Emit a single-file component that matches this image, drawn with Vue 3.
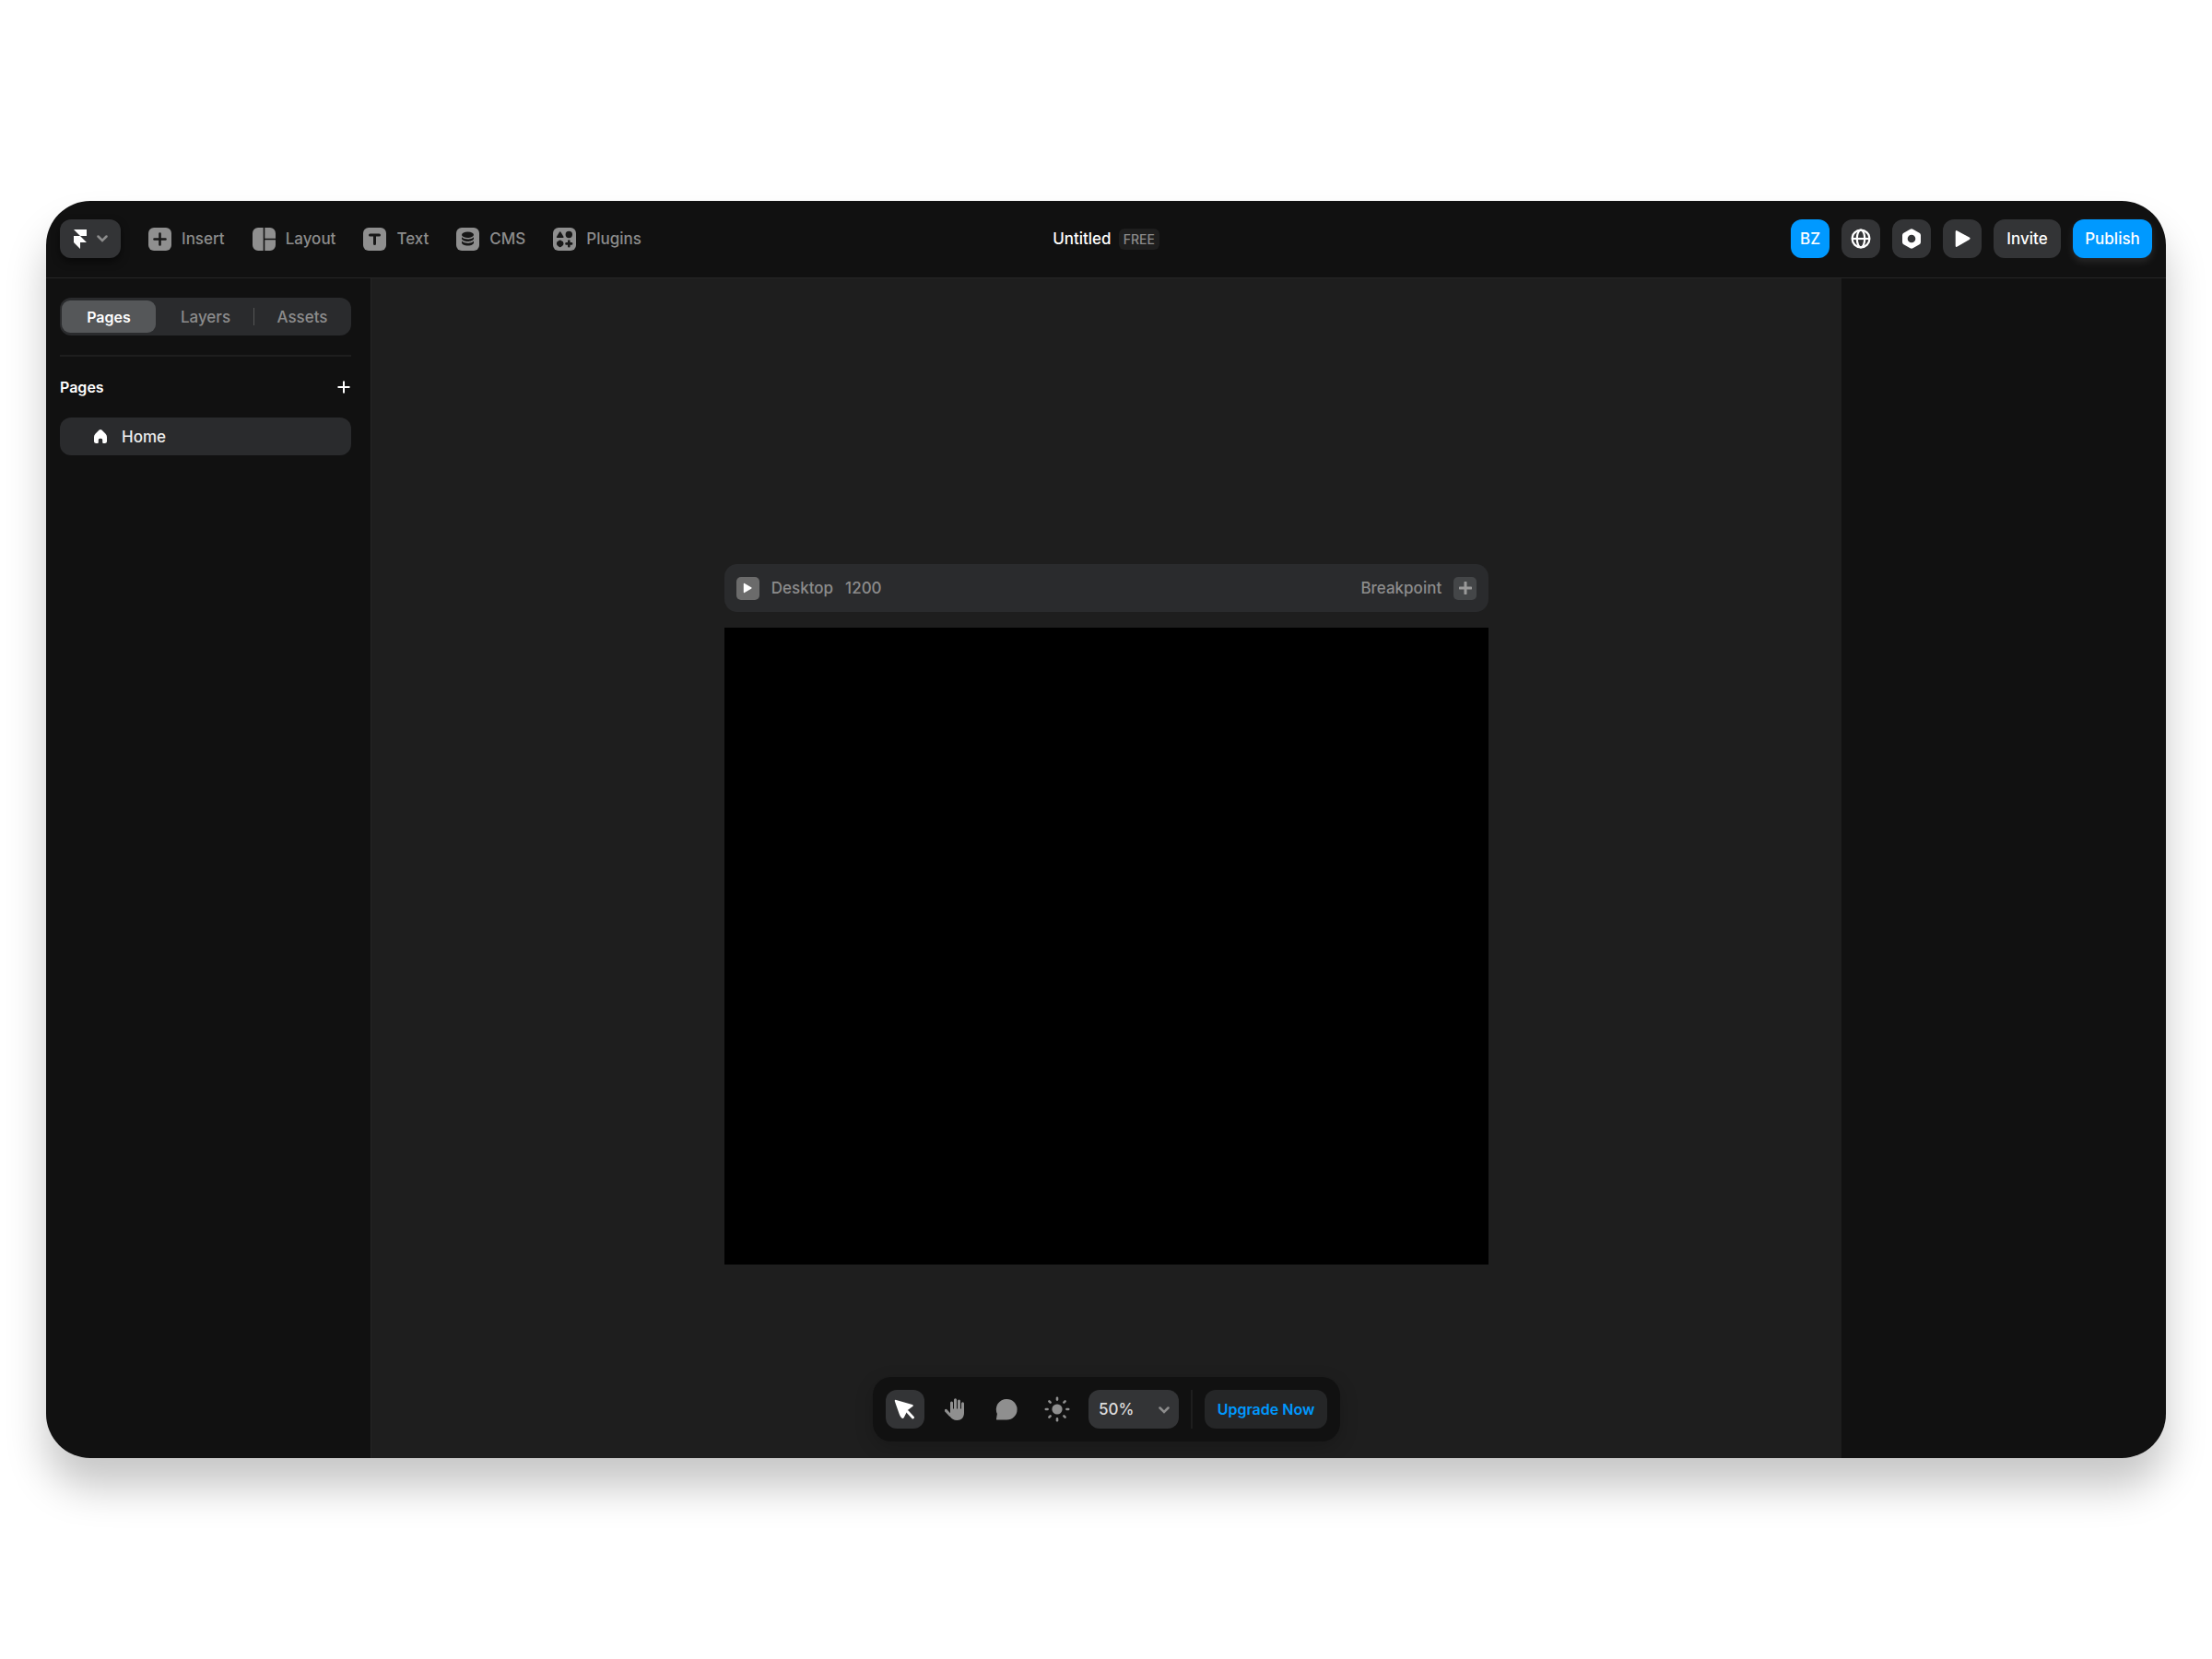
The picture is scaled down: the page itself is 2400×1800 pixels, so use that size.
<script setup>
import { ref } from 'vue'

const tools = ['Insert', 'Layout', 'Text', 'CMS', 'Plugins']
const tabs = ['Pages', 'Layers', 'Assets']
const activeTab = ref('Pages')
const activeMode = ref('select')
const zoom = ref('50%')
const rays = [0, 45, 90, 135, 180, 225, 270, 315]
</script>

<template>
  <div class="page">
    <div class="window">
      <header class="topbar">
        <nav class="tools" aria-label="Tools">
          <button class="btn logo" aria-label="Main menu">
            <svg width="14" height="21" viewBox="0 0 14 21" fill="#fff"><path d="M0 0h14v7H7zM0 7h7l7 7H0zM0 14h7v7z" /></svg>
            <svg class="chevron" width="12" height="8" viewBox="0 0 12 8"><path d="M1.5 1.5 6 6l4.500-4.500" /></svg>
          </button>
          <button v-for="tool in tools" :key="tool" class="tool">
            <svg width="25" height="25" viewBox="0 0 25 25">
              <template v-if="tool === 'Layout'">
                <path d="M6 0h5.700v25H6a6 6 0 0 1-6-6V6a6 6 0 0 1 6-6zM13.300 0H19a6 6 0 0 1 6 6v5.700H13.300zM13.300 13.300H25V19a6 6 0 0 1-6 6h-5.700z" />
              </template>
              <rect v-else width="25" height="25" rx="6" />
              <path v-if="tool === 'Insert'" class="line" d="M12.500 6.500v12M6.500 12.500h12" />
              <path v-if="tool === 'Text'" class="line thick" d="M7.500 8h10M12.500 8v9.500" />
              <g v-if="tool === 'CMS'" class="cut">
                <ellipse cx="12.500" cy="7.800" rx="6.500" ry="3.200" />
                <path d="M6 10.300c1.500 1.700 4 2.200 6.500 2.200s5-.5 6.500-2.200v1.400c0 1.900-3 3.200-6.500 3.200S6 13.600 6 11.700z" />
                <path d="M6 14.500c1.500 1.700 4 2.200 6.500 2.200s5-.5 6.500-2.200v1.800c0 1.900-3 3.300-6.500 3.300S6 18.200 6 16.300z" />
              </g>
              <g v-if="tool === 'Plugins'" class="cut">
                <path d="M7 4.700q.7-1.100 1.400 0l3 5q.6 1.200-.7 1.200h-6q-1.300 0-.7-1.200z" />
                <circle cx="17.300" cy="7.500" r="3.700" />
                <path d="M7.700 13.400q1 0 1.500.8 2.300.5 2.300 3.100t-2.300 3.100q-.5.800-1.500.8t-1.500-.8q-2.300-.5-2.300-3.100t2.300-3.100q.5-.8 1.500-.8z" />
                <path class="line" d="M17.300 14.600v5.600M14.500 17.400h5.600" />
              </g>
            </svg>
            {{ tool }}
          </button>
        </nav>

        <div class="title">
          <span>Untitled</span>
          <span class="plan">FREE</span>
        </div>

        <div class="actions">
          <button class="btn square blue">BZ</button>
          <button class="btn square" aria-label="Language">
            <svg width="22" height="22" viewBox="0 0 22 22" fill="none" stroke="#fff" stroke-width="2.200">
              <circle cx="11" cy="11" r="9.400" /><ellipse cx="11" cy="11" rx="4.200" ry="9.400" /><path d="M2 11h18" />
            </svg>
          </button>
          <button class="btn square" aria-label="Settings">
            <svg width="22" height="22" viewBox="0 0 22 22" fill="#fff" fill-rule="evenodd">
              <path d="M9.500.7q1.500-.8 3 0l7 4Q21 5.600 21 7.300v7.400q0 1.700-1.500 2.600l-7 4q-1.500.8-3 0l-7-4Q1 16.400 1 14.700V7.300q0-1.700 1.500-2.600zM11 6.700a4.300 4.300 0 1 0 0 8.600 4.300 4.300 0 0 0 0-8.600z" />
            </svg>
          </button>
          <button class="btn square" aria-label="Preview">
            <svg width="22" height="22" viewBox="0 0 22 22" fill="#fff"><path d="M3.700 3.600q0-2.200 2-1.200l13 7.200q1.800 1.200 0 2.400l-13 7.600q-2 1-2-1.200z" /></svg>
          </button>
          <button class="btn invite">Invite</button>
          <button class="btn publish blue">Publish</button>
        </div>
      </header>

      <div class="body">
        <aside class="sidebar">
          <div class="tabs" role="tablist">
            <button
              v-for="tab in tabs"
              :key="tab"
              role="tab"
              class="tab"
              :class="{ active: activeTab === tab }"
              :aria-selected="activeTab === tab"
              @click="activeTab = tab"
            >{{ tab }}</button>
          </div>
          <div class="section">
            <h2>Pages</h2>
            <button class="add" aria-label="Add page">
              <svg width="14" height="14" viewBox="0 0 14 14"><path d="M7 .5v13M.5 7h13" stroke="#fff" stroke-width="2" /></svg>
            </button>
          </div>
          <a class="row" href="#home">
            <svg width="14" height="15" viewBox="0 0 14 15" fill="#fff">
              <path d="M5.600.6q1.400-1.100 2.800 0l4 3.800Q14 6 14 8v4.500q0 2.500-2.500 2.500h-1.300q-1 0-1-1v-2.800q0-1.400-2.200-1.400t-2.200 1.400V14q0 1-1 1H2.500Q0 15 0 12.500V8q0-2 1.600-3.600z" />
            </svg>
            Home
          </a>
        </aside>

        <main class="canvas">
          <section class="artboard">
            <div class="artbar">
              <button class="mini play" aria-label="Preview breakpoint">
                <svg width="10" height="12" viewBox="0 0 10 12" fill="#fff"><path d="M.8 1.600Q.8.400 1.900 1l7.200 4.300q1 .7 0 1.400L1.900 11q-1.100.6-1.100-.6z" /></svg>
              </button>
              <span>Desktop</span>
              <span>1200</span>
              <span class="breakpoint">Breakpoint</span>
              <button class="mini" aria-label="Add breakpoint">
                <svg width="14" height="14" viewBox="0 0 14 14"><path d="M7 1v12M1 7h12" stroke="#999" stroke-width="3" stroke-linecap="round" /></svg>
              </button>
            </div>
            <div class="frame"></div>
          </section>

          <div class="dock" role="toolbar" aria-label="Canvas tools">
            <button class="mode" :class="{ active: activeMode === 'select' }" aria-label="Select" @click="activeMode = 'select'">
              <svg width="24" height="24" viewBox="0 0 24 24">
                <path d="M.8 3.300Q.5 1.400 2.400 1.900l17.400 5q2 .8.400 2.200l-5.400 4-4 7.800q-1.200 2.200-3 .2-1.400-1.600-2-3.500z" />
                <path d="m14.500 14.500 6 6.500" stroke="currentColor" stroke-width="3" stroke-linecap="round" />
              </svg>
            </button>
            <button class="mode" :class="{ active: activeMode === 'hand' }" aria-label="Pan" @click="activeMode = 'hand'">
              <svg width="24" height="24" viewBox="0 0 24 24">
                <g fill="none" stroke="currentColor" stroke-width="3" stroke-linecap="round">
                  <path d="M7.500 14V5M11.500 13V1.700M15.500 13V3M19.500 14V5.700M1.300 13.400l4.500 4.800" />
                </g>
                <path d="M6 11.500h15V16c0 5-3 8-7.500 8-4 0-6-1.700-8-4.500L3 15.500l3 1z" />
              </svg>
            </button>
            <button class="mode" :class="{ active: activeMode === 'comment' }" aria-label="Comment" @click="activeMode = 'comment'">
              <svg width="24" height="24" viewBox="0 0 24 24"><path d="M12.300 1a11.200 11.200 0 1 1 0 22.600H2q-1.200 0-1-1.200l.9-5.400A11.200 11.200 0 0 1 12.300 1z" /></svg>
            </button>
            <button class="mode" :class="{ active: activeMode === 'theme' }" aria-label="Theme" @click="activeMode = 'theme'">
              <svg width="28" height="28" viewBox="0 0 28 28">
                <circle cx="14" cy="14" r="5.600" />
                <path v-for="angle in rays" :key="angle" d="M14 1.800v1.800" stroke="currentColor" stroke-width="2.600" stroke-linecap="round" :transform="`rotate(${angle} 14 14)`" />
              </svg>
            </button>
            <div class="zoom">
              <select v-model="zoom" aria-label="Zoom">
                <option>50%</option>
                <option>100%</option>
                <option>200%</option>
              </select>
              <svg class="chevron" width="12" height="8" viewBox="0 0 12 8"><path d="M1.500 1.500 6 6l4.500-4.500" /></svg>
            </div>
            <span class="divider"></span>
            <button class="upgrade">Upgrade Now</button>
          </div>
        </main>

        <aside class="inspector" aria-label="Properties"></aside>
      </div>
    </div>
  </div>
</template>

<style>
body {
  background: #fff;
}
</style>

<style scoped>
* {
  box-sizing: border-box;
}

.page {
  display: flex;
  min-height: 100vh;
  padding: 218px 50px;
  font-family: Inter, "Liberation Sans", sans-serif;
  font-size: 17px;
  font-weight: 500;
  line-height: 20px;
  color: #8c8c8c;
}

button,
select {
  margin: 0;
  padding: 0;
  border: 0;
  background: none;
  font: inherit;
  color: inherit;
}

svg {
  display: block;
  flex: none;
}

.window {
  flex: 1;
  display: flex;
  flex-direction: column;
  overflow: hidden;
  border-radius: 48px;
  background: #111;
  box-shadow: 0 32px 44px rgba(0, 0, 0, 0.22);
}

.topbar {
  display: grid;
  grid-template-columns: 1fr auto 1fr;
  align-items: center;
  height: 84px;
  padding: 0 15px 1px;
  border-bottom: 1px solid #262626;
}

.tools {
  display: flex;
  align-items: center;
  gap: 30px;
}

.btn {
  display: flex;
  align-items: center;
  justify-content: center;
  height: 42px;
  border-radius: 12px;
  background: #333436;
  color: #fff;
}

.logo {
  width: 66px;
  gap: 11px;
  box-shadow: 0 4px 8px rgba(0, 0, 0, 0.5);
}

.chevron {
  fill: none;
  stroke: #8c8c8c;
  stroke-width: 2.5;
  stroke-linecap: round;
}

.tool {
  display: flex;
  align-items: center;
  gap: 11px;
  fill: #8f8f8f;
}

.cut {
  fill: #171717;
}

.line {
  fill: none;
  stroke: #171717;
  stroke-width: 2.6;
  stroke-linecap: round;
}

.thick {
  stroke-width: 3;
}

.title {
  display: flex;
  align-items: center;
  gap: 8px;
  color: #fff;
}

.plan {
  padding: 0 5px;
  border-radius: 6px;
  background: #1e1e1e;
  color: #8c8c8c;
  font-size: 14px;
  line-height: 23px;
}

.actions {
  display: flex;
  justify-content: flex-end;
  gap: 13px;
}

.square {
  width: 42px;
}

.blue {
  background: #09f;
}

.invite {
  width: 73px;
}

.publish {
  width: 86px;
  box-shadow: 0 4px 10px rgba(255, 255, 255, 0.1);
}

.body {
  flex: 1;
  display: flex;
}

.sidebar {
  width: 353px;
  padding: 21px 21px 0 15px;
  border-right: 1px solid #262626;
}

.tabs {
  display: flex;
  gap: 3px;
  height: 41px;
  padding: 3px 2px;
  border-radius: 12px;
  background: #2a2b2d;
}

.tab {
  position: relative;
  flex: 1;
  border-radius: 9px;
}

.tab.active {
  background: #555759;
  color: #fff;
  font-size: 16px;
  font-weight: 600;
}

.tab:not(.active) + .tab:not(.active)::before {
  content: "";
  position: absolute;
  left: -2px;
  top: 8px;
  bottom: 8px;
  width: 1px;
  background: #555;
}

.section {
  display: flex;
  align-items: center;
  justify-content: space-between;
  height: 68px;
  margin-top: 21px;
  border-top: 2px solid #1e1e1e;
}

h2 {
  margin: 0;
  color: #fff;
  font-size: 16px;
  font-weight: 600;
}

.add {
  padding: 1px;
}

.row {
  display: flex;
  align-items: center;
  gap: 16px;
  height: 41px;
  padding-left: 37px;
  border-radius: 12px;
  background: #2a2b2d;
  color: #eee;
  text-decoration: none;
}

.canvas {
  flex: 1;
  display: flex;
  flex-direction: column;
  align-items: center;
  min-width: 0;
  padding: 310px 0 18px;
  background: #1e1e1e;
}

.artboard {
  width: 52%;
}

.artbar {
  display: flex;
  align-items: center;
  gap: 13px;
  height: 52px;
  padding: 0 13px;
  border-radius: 14px;
  background: #2a2b2d;
}

.mini {
  display: flex;
  align-items: center;
  justify-content: center;
  width: 25px;
  height: 25px;
  border-radius: 5px;
  background: #444648;
}

.play {
  background: #6b6b6b;
}

.breakpoint {
  margin-left: auto;
}

.frame {
  margin-top: 17px;
  aspect-ratio: 6 / 5;
  background: #000;
}

.dock {
  display: flex;
  align-items: center;
  gap: 13px;
  margin-top: auto;
  padding: 14px;
  border-radius: 20px;
  background: #111;
  box-shadow: 0 6px 20px rgba(0, 0, 0, 0.2);
}

.mode {
  display: flex;
  align-items: center;
  justify-content: center;
  width: 42px;
  height: 42px;
  border-radius: 12px;
  color: #8f8f8f;
  fill: currentColor;
}

.mode.active {
  background: #333436;
  color: #fff;
}

.zoom {
  position: relative;
  width: 98px;
  height: 42px;
}

.zoom select {
  width: 100%;
  height: 100%;
  padding-left: 11px;
  border-radius: 12px;
  background: #333436;
  color: #ddd;
  appearance: none;
}

.zoom .chevron {
  position: absolute;
  right: 10px;
  top: 18px;
  pointer-events: none;
}

.divider {
  width: 2px;
  height: 42px;
  background: #1e1e1e;
}

.upgrade {
  width: 133px;
  height: 42px;
  border-radius: 12px;
  background: #252627;
  color: #09f;
  font-size: 16px;
  font-weight: 600;
}

.inspector {
  width: 352px;
}
</style>
